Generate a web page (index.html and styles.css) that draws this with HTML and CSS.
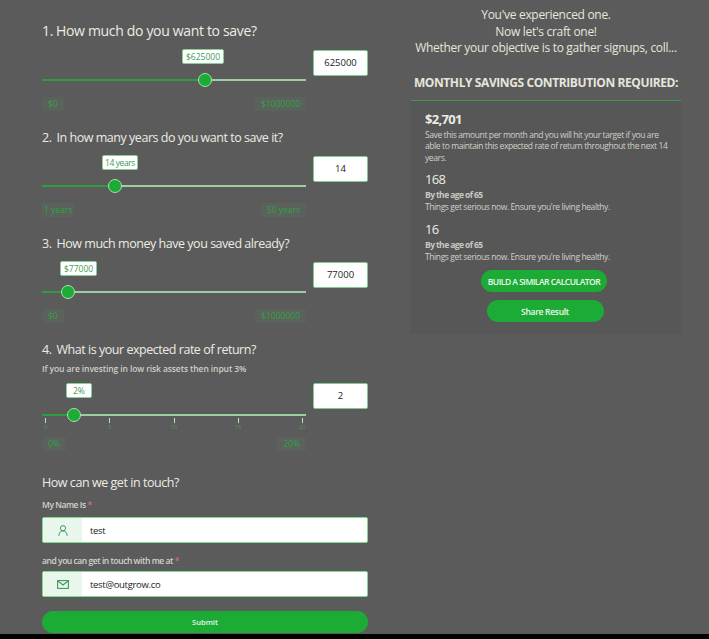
FILE: index.html
```html
<!DOCTYPE html>
<html lang="en">
<head>
<meta charset="utf-8">
<title>Savings calculator</title>
<link rel="stylesheet" href="styles.css">
</head>
<body>
<div class="page">
  <main class="left">
    <section class="question q-first">
      <h2><span class="num">1.</span>How much do you want to save?</h2>
      <div class="slider-row">
        <div class="slider-col">
          <div class="slider">
            <span class="tip" style="left:140px">$625000</span>
            <div class="track"><div class="fill" style="width:163px"></div></div>
            <span class="thumb" style="left:163px"></span>
          </div>
          <div class="ends"><span class="chip">$0</span><span class="chip">$1000000</span></div>
        </div>
        <div class="value">625000</div>
      </div>
    </section>
    <section class="question">
      <h2><span class="num">2.</span>In how many years do you want to save it?</h2>
      <div class="slider-row">
        <div class="slider-col">
          <div class="slider">
            <span class="tip tip-narrow" style="left:60px">14 years</span>
            <div class="track"><div class="fill" style="width:73px"></div></div>
            <span class="thumb" style="left:73px"></span>
          </div>
          <div class="ends"><span class="chip chip-tight">1 years</span><span class="chip">50 years</span></div>
        </div>
        <div class="value">14</div>
      </div>
    </section>
    <section class="question">
      <h2><span class="num">3.</span>How much money have you saved already?</h2>
      <div class="slider-row">
        <div class="slider-col">
          <div class="slider">
            <span class="tip" style="left:18px">$77000</span>
            <div class="track"><div class="fill" style="width:26px"></div></div>
            <span class="thumb" style="left:26px"></span>
          </div>
          <div class="ends"><span class="chip">$0</span><span class="chip">$1000000</span></div>
        </div>
        <div class="value">77000</div>
      </div>
    </section>
    <section class="question q-ticks">
      <h2><span class="num">4.</span>What is your expected rate of return?</h2>
      <p class="hint">If you are investing in low risk assets then input 3%</p>
      <div class="slider-row">
        <div class="slider-col">
          <div class="slider">
            <span class="tip tip-wide" style="left:24px">2%</span>
            <div class="track"><div class="fill" style="width:32px"></div></div>
            <span class="thumb" style="left:32px"></span>
          </div>
          <div class="ticks">
            <span class="tick">0</span><span class="tick">5</span><span class="tick">10</span><span class="tick">15</span><span class="tick">20</span>
          </div>
          <div class="ends ends-ticks"><span class="chip">0%</span><span class="chip">20%</span></div>
        </div>
        <div class="value">2</div>
      </div>
    </section>
    <section class="contact">
      <h2>How can we get in touch?</h2>
      <label class="field-label">My Name Is <span class="req">*</span></label>
      <div class="field">
        <span class="field-icon">
          <svg width="10" height="11" viewBox="0 0 10 11" fill="none" stroke="#3f9a58" stroke-width="1"><circle cx="5" cy="3.200" r="2.600"/><path d="M.8 10.800c0-2.700 1.700-4.900 4.200-4.900s4.200 2.200 4.200 4.900"/></svg>
        </span>
        <span class="field-text">test</span>
      </div>
      <label class="field-label field-label-second">and you can get in touch with me at <span class="req">*</span></label>
      <div class="field">
        <span class="field-icon">
          <svg width="12" height="9" viewBox="0 0 12 9" fill="none" stroke="#3f9a58" stroke-width="1.1"><rect x=".6" y=".6" width="10.800" height="7.800"/><path d="M.6.800 6 5l5.400-4.200"/></svg>
        </span>
        <span class="field-text">test@outgrow.co</span>
      </div>
      <button class="submit" type="button">Submit</button>
    </section>
  </main>
  <aside class="right">
    <div class="intro">
      <p>You've experienced one.</p>
      <p>Now let's craft one!</p>
      <p class="clip">Whether your objective is to gather signups, coll...</p>
    </div>
    <h1>MONTHLY SAVINGS CONTRIBUTION REQUIRED:</h1>
    <div class="panel">
      <div class="result">
        <h3 class="big">$2,701</h3>
        <p class="desc">Save this amount per month and you will hit your target if you are able to maintain this expected rate of return throughout the next 14 years.</p>
      </div>
      <div class="result">
        <h3>168</h3>
        <p class="sub">By the age of 65</p>
        <p class="desc">Things get serious now. Ensure you're living healthy.</p>
      </div>
      <div class="result">
        <h3>16</h3>
        <p class="sub">By the age of 65</p>
        <p class="desc">Things get serious now. Ensure you're living healthy.</p>
      </div>
      <div class="actions">
        <button class="pill pill-build" type="button">BUILD A SIMILAR CALCULATOR</button>
        <button class="pill pill-share" type="button">Share Result</button>
      </div>
    </div>
  </aside>
</div>
<div class="bottom-bar"></div>
</body>
</html>
```

FILE: styles.css
```css
* { box-sizing: border-box; }
html, body { margin: 0; padding: 0; }
body {
  width: 709px;
  height: 639px;
  overflow: hidden;
  background: #5b5b5b;
  font-family: "Open Sans", "Noto Sans", sans-serif;
  color: #e8e8df;
  display: flex;
  flex-direction: column;
}
p, h1, h2, h3 { margin: 0; font-weight: 400; }
.page { display: flex; height: 634px; overflow: hidden; flex: none; }
.left { width: 368px; padding: 21px 0 0 42px; flex: none; }
.right { width: 270px; margin-left: 43px; padding-top: 7px; flex: none; }
.bottom-bar { height: 5px; background: #000; flex: none; }

.question { height: 106px; }
.q-first { height: 107px; }
.q-ticks { height: 133px; }
.question h2 { font-size: 12.5px; line-height: 20px; letter-spacing: -.47px; color: #ecece3; white-space: nowrap; }
.q-first h2 { font-size: 14px; letter-spacing: -.33px; }
.num { margin-right: 5px; }
.q-first .num { margin-right: 3px; }
.hint { font-size: 8.5px; line-height: 12px; margin-top: 3px; color: #cfcfc8; font-weight: 600; letter-spacing: -.1px; }
.slider-row { display: flex; gap: 7px; margin-top: 8px; align-items: flex-start; }
.q-first .slider-row { margin-top: 9px; }
.slider-col { width: 264px; flex: none; }
.slider { position: relative; height: 37px; }
.track { position: absolute; left: 0; right: 0; top: 29px; height: 2px; background: #9ad09f; }
.fill { height: 100%; background: #2e9c3f; }
.thumb {
  position: absolute;
  top: 23px;
  width: 14px;
  height: 14px;
  margin-left: -7px;
  border-radius: 50%;
  background: #1cac35;
  border: 1px solid #a6e0ae;
}
.tip {
  position: absolute;
  top: -1px;
  height: 15px;
  padding: 0 3px;
  line-height: 13px;
  font-size: 8.5px;
  white-space: nowrap;
  color: #3f9a58;
  background: #fff;
  border: 1px solid #86cf92;
  border-radius: 2px;
}
.tip-narrow { padding: 0 2px; letter-spacing: -.4px; }
.tip-wide { padding: 0 6px; }
.q-ticks .tip { top: 0; }
.q-ticks .slider { height: 34px; }
.q-ticks .track { top: 31px; }
.q-ticks .thumb { top: 25px; }
.ends { display: flex; justify-content: space-between; margin-top: 10px; }
.ends-ticks { margin-top: 6px; }
.chip {
  height: 14px;
  padding: 0 6px;
  line-height: 14px;
  font-size: 8.5px;
  color: #35a045;
  background: #5a625b;
  border-radius: 2px;
}
.chip-tight { padding: 0 2px; }
.value {
  width: 55px;
  height: 26px;
  background: #fff;
  border: 1px solid #7fcb8b;
  border-radius: 2px;
  color: #222;
  font-size: 9.5px;
  line-height: 24px;
  text-align: center;
}
.ticks { display: flex; justify-content: space-between; height: 14px; }
.tick {
  width: 7px;
  font-size: 5.5px;
  line-height: 6px;
  color: #3fa04e;
  text-align: center;
  padding-top: 7px;
  position: relative;
}
.tick::before {
  content: "";
  position: absolute;
  left: 3px;
  top: 1px;
  width: 1px;
  height: 5px;
  background: #cfd8cf;
}

.contact { width: 326px; }
.contact h2 { font-size: 12.5px; line-height: 20px; letter-spacing: -.45px; color: #ecece3; }
.field-label { display: block; font-size: 8.5px; line-height: 12px; margin: 6px 0 6px; color: #d3d3cc; font-weight: 600; letter-spacing: -.45px; }
.field-label-second { margin-top: 12px; margin-bottom: 4px; }
.req { color: #c9707c; }
.field {
  display: flex;
  align-items: center;
  height: 26px;
  background: #fff;
  border: 1px solid #7fd98f;
  border-radius: 2px;
  overflow: hidden;
}
.field-icon {
  width: 39px;
  height: 100%;
  background: #e9f6ec;
  display: flex;
  align-items: center;
  justify-content: center;
  flex: none;
}
.field-text { padding-left: 8px; font-size: 9.5px; letter-spacing: -.3px; color: #222; }
.submit {
  display: block;
  width: 326px;
  height: 22px;
  margin-top: 14px;
  border: 0;
  border-radius: 11px;
  background: #1cac35;
  color: #e9f5ea;
  font: 600 7.5px "Open Sans", sans-serif;
}

.intro { text-align: center; font-size: 12px; line-height: 16.500px; letter-spacing: -.3px; color: #e6e6dd; }
.clip { white-space: nowrap; }
.right h1 {
  margin-top: 17px;
  padding-bottom: 8px;
  text-align: center;
  font-size: 12px;
  line-height: 18px;
  font-weight: 700;
  letter-spacing: -.4px;
  white-space: nowrap;
  color: #e6e6dd;
  border-bottom: 1px solid #3d9a4c;
}
.panel { background: #575757; padding: 9px 10px 10px 14px; height: 233px; }
.result { margin-bottom: 7px; }
.result h3 { font-size: 13px; line-height: 18px; letter-spacing: -.7px; margin-bottom: 1px; color: #ecece3; }
.result h3.big { font-weight: 700; line-height: 19px; margin-bottom: 0; }
.sub { font-size: 8.5px; line-height: 12px; font-weight: 700; color: #c9c9c2; letter-spacing: -.58px; }
.desc { font-size: 8.5px; line-height: 11.500px; color: #d0d0c9; letter-spacing: -.4px; }
.actions { display: flex; flex-direction: column; align-items: center; gap: 8px; margin: 8px 0 0 -6px; }
.pill {
  height: 22px;
  border: 0;
  border-radius: 11px;
  background: #1cac35;
  color: #eef8ef;
  font: 600 8.5px "Open Sans", sans-serif;
  letter-spacing: -.5px;
  padding: 0;
}
.pill-build { width: 126px; margin-left: -2px; }
.pill-share { width: 117px; letter-spacing: -.3px; }
```
